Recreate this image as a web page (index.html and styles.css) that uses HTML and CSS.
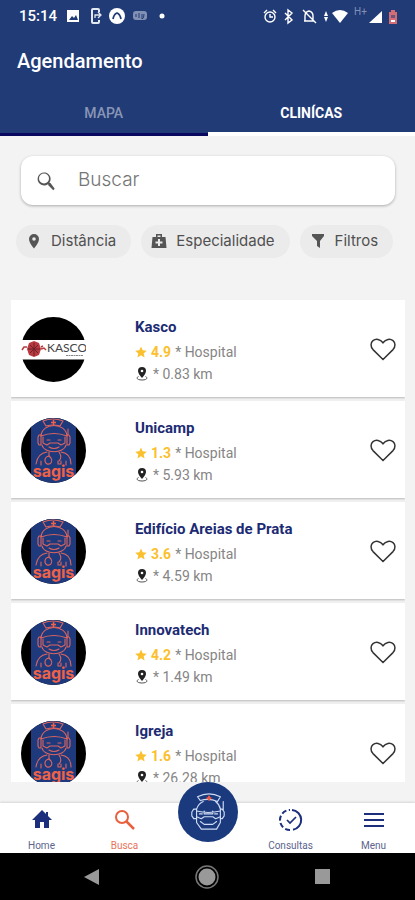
FILE: index.html
```html
<!DOCTYPE html>
<html lang="pt-BR">
<head>
    <meta charset="utf-8">
    <meta name="viewport" content="width=device-width, initial-scale=1">
    <title>Agendamento</title>
    <link rel="stylesheet" href="styles.css">
</head>
<body>

<svg class="sprite" aria-hidden="true">
    <symbol id="heart" viewBox="0 0 26 23">
        <path d="M13 21.500 3 11.600C.3 8.800.5 4.700 3 2.700c2.800-2.300 7.200-1.700 10 2 2.800-3.700 7.200-4.300 10-2 2.500 2 2.700 6.100 0 8.900z" fill="#fff" stroke="#333" stroke-width="1.500"/>
    </symbol>
    <symbol id="star" viewBox="0 0 24 24">
        <path d="m12 1 3.300 7.600 8.200.700-6.200 5.500 1.900 8.200-7.200-4.300L4.800 23l1.900-8.200L.5 9.300l8.200-.7z" fill="#fbc02d"/>
    </symbol>
    <symbol id="place" viewBox="0 0 12 14">
        <path d="M6 0a4 4 0 0 0-4 4c0 2.800 4 7 4 7s4-4.200 4-7a4 4 0 0 0-4-4z" fill="#222"/>
        <circle cx="6" cy="4" r="1.300" fill="#fff"/>
        <path d="M2.500 9.500C-.5 11 1.500 13 6 13s6.500-2 3.500-3.500" fill="none" stroke="#555"/>
    </symbol>
    <symbol id="nurse" viewBox="0 0 42 42">
        <g fill="none" stroke="currentColor" stroke-width="1.200" stroke-linejoin="round" stroke-linecap="round">
            <path d="M13 9 10 5q12-6 24 0l-3 5q-9-4-18-1z"/>
            <path d="M9 18q2-6 7-8M34 18q-1-5-5-8"/>
            <path d="M9 18H6l-2 3v4l2 3h3zM34 18h2l2 3v4l-2 3h-2zM37 19v-9"/>
            <path d="M9 20q12 3 25 0M9 26l5 2 3-2h9l3 2 5-2M17 20v3h9v-3"/>
            <path d="M9 28v4l5 7h16l4-7v-4M13 31l4 3h9l4-3"/>
            <path d="M12 23h3M28 23h3"/>
        </g>
        <path d="M22 4v5M19.500 6.500h5" stroke="#f05a40" stroke-width="2"/>
    </symbol>
    <symbol id="sagis" viewBox="0 0 65 65">
        <clipPath id="round"><circle cx="32.500" cy="32.500" r="32.500"/></clipPath>
        <g clip-path="url(#round)">
            <path d="M0 0h65v65H0z" fill="#000"/>
            <path d="M10 0h45v65H10z" fill="#1e3a7c"/>
            <g fill="none" stroke="#dc6560" stroke-width="1.100" stroke-linecap="round" stroke-linejoin="round">
                <path d="M25 8 22 3q10-4 20 0l-3 5q-7-2-14 0z"/>
                <path d="M20 18c1-14 25-14 26 0M20 18q13-5 26 0"/>
                <path d="M20 17h-2l-1 2v6l1 2h2zM46 17h2l1 2v6l-1 2h-2zM47 17v-6"/>
                <path d="M22 19v6l4 2 3-2h8l3 2 4-2v-6M26 22h3M37 22h3"/>
                <path d="M21 27c2 9 22 9 24 0M28 29q5 3 10 0"/>
                <path d="M26 34c-7 1-10 5-11 12M40 34c7 1 10 5 10 12M28 34v4M38 34c2 3 3 6 0 9"/>
                <path d="M28 38c-5 1-5 6-2 8 4 1 6-3 4-6zM37 43v3h3v-3M20 43v4M45 43v4"/>
            </g>
            <path d="M32.500 2v5M30 4.500h5" stroke="#ef6248" stroke-width="1.500"/>
        </g>
        <text x="32.500" y="59" text-anchor="middle" class="sagis-name">sagis</text>
    </symbol>
    <symbol id="kasco" viewBox="0 0 65 65">
        <circle cx="32.500" cy="32.500" r="32.500"/>
        <path d="M0 23h65v19.500H0z" fill="#fff"/>
        <path d="M13 24l5 2 2 6-2 6-5 2-5-2-2-6 2-6z" fill="#b83a40"/>
        <path d="M9 28l8 8M17 28l-8 8M13 26v13M7 32h12" stroke="#6d2028" stroke-width="1"/>
        <path d="M6 30H3l-2 3M20 32l3-1 2 2M20 30l2-1" fill="none" stroke="#b83a40" stroke-width="1.500"/>
        <text x="26" y="35" class="kasco-name">KASCO</text>
        <path d="M45 38.500h17" stroke="#888" stroke-dasharray="2 .5"/>
    </symbol>
</svg>

<div class="app">
    <header class="top">
        <div class="status">
            <span class="clock">15:14</span>
            <svg width="110" height="18" viewBox="0 0 110 18">
                <path d="M1 3h12v12H1z" fill="#fff"/>
                <path d="m3 13 3-4 2 2 2-3 2 5z" fill="#213b77"/>
                <path d="M33 5V3q0-1-1-1h-5q-1 0-1 1v12q0 1 1 1h5q1 0 1-1v-2" fill="none" stroke="#e4e8f0" stroke-width="2"/>
                <path d="M29 11V8h5M32 5l3 3-3 3" fill="none" stroke="#e4e8f0" stroke-width="1.300"/>
                <circle cx="51" cy="9" r="8" fill="#fff"/>
                <path d="M47 12q1-5 4-6 3 1 4 6" fill="none" stroke="#213b77" stroke-width="1.800"/>
                <rect x="67" y="4" width="14" height="9" rx="3" fill="#8290b3"/>
                <path d="M70 7v3M73 6v5M76 7v5q2 0 2-5" stroke="#213b77" fill="none"/>
                <circle cx="96" cy="9" r="2.500" fill="#fff"/>
            </svg>
            <svg class="status-right" width="136" height="22" viewBox="0 0 136 22">
                <g fill="none" stroke="#fff" stroke-width="1.400">
                    <circle cx="7" cy="12" r="5"/>
                    <path d="M7 9v3h3M1 8l3-3M13 8l-3-3M22 8l7 7-4 3V5l4 3-7 7"/>
                    <path d="M42 16v-5q0-4 4-5 4 1 4 5v5M41 16h10M40 5l13 13"/>
                </g>
                <path d="m61 11 2-5 2 5zM61 12l2 5 2-5z" fill="#fff"/>
                <path d="M69 8q8-6 16 0l-8 10z" fill="#fff"/>
                <text x="91" y="10" class="network">H+</text>
                <path d="M119 6v12h-13z" fill="#fff"/>
                <path d="M126 7h2V5h4v2h2v12h-8z" fill="#d36d75"/>
                <path d="M128 16h4" stroke="#fff" stroke-width="2"/>
                <path d="M128 10h4v3h-4z" fill="#6d5478"/>
            </svg>
        </div>
        <h1 class="title">Agendamento</h1>
        <nav class="tabs">
            <button class="tab">MAPA</button>
            <button class="tab active">CLINÍCAS</button>
        </nav>
    </header>

    <main class="page">
        <label class="search">
            <svg width="24" height="24" viewBox="0 0 24 24"><path d="M15.500 14h-.79l-.28-.27A6.500 6.500 0 1 0 13 15.200l.28.28v.79l5 4.990L19.700 19.800zM9 14.500A5 5 0 1 1 9 4.500a5 5 0 0 1 0 10z" fill="#555"/></svg>
            <input type="search" placeholder="Buscar" aria-label="Buscar">
        </label>

        <div class="chips">
            <button class="chip">
                <svg width="16" height="16" viewBox="0 0 16 16"><path d="M8 1a5 5 0 0 0-5 5c0 4 5 9.500 5 9.500S13 10 13 6a5 5 0 0 0-5-5zm0 3.200a1.800 1.800 0 1 1 0 3.600 1.800 1.800 0 0 1 0-3.600z" fill="#555" fill-rule="evenodd"/></svg>
                Distância
            </button>
            <button class="chip">
                <svg width="16" height="16" viewBox="0 0 16 16"><path d="M5 4V1h6v3h3.500l1 11H.5l1-11zm1.500 0h3V2.500h-3zM7 6v2.500H4.500v2H7V13h2v-2.500h2.500v-2H9V6z" fill="#555" fill-rule="evenodd"/></svg>
                Especialidade
            </button>
            <button class="chip">
                <svg width="16" height="16" viewBox="0 0 16 16"><path d="M2 1h12v2l-4 5v7l-3-2V8L2 3z" fill="#555"/></svg>
                Filtros
            </button>
        </div>

        <section class="list">
            <article class="card">
                <svg class="avatar"><use href="#kasco"/></svg>
                <div class="info">
                    <h2>Kasco</h2>
                    <p><svg class="star"><use href="#star"/></svg><b>4.9</b> * Hospital</p>
                    <p><svg class="place"><use href="#place"/></svg>* 0.83 km</p>
                </div>
                <button class="fav" aria-label="Favoritar"><svg><use href="#heart"/></svg></button>
            </article>
            <article class="card">
                <svg class="avatar"><use href="#sagis"/></svg>
                <div class="info">
                    <h2>Unicamp</h2>
                    <p><svg class="star"><use href="#star"/></svg><b>1.3</b> * Hospital</p>
                    <p><svg class="place"><use href="#place"/></svg>* 5.93 km</p>
                </div>
                <button class="fav" aria-label="Favoritar"><svg><use href="#heart"/></svg></button>
            </article>
            <article class="card">
                <svg class="avatar"><use href="#sagis"/></svg>
                <div class="info">
                    <h2>Edifício Areias de Prata</h2>
                    <p><svg class="star"><use href="#star"/></svg><b>3.6</b> * Hospital</p>
                    <p><svg class="place"><use href="#place"/></svg>* 4.59 km</p>
                </div>
                <button class="fav" aria-label="Favoritar"><svg><use href="#heart"/></svg></button>
            </article>
            <article class="card">
                <svg class="avatar"><use href="#sagis"/></svg>
                <div class="info">
                    <h2>Innovatech</h2>
                    <p><svg class="star"><use href="#star"/></svg><b>4.2</b> * Hospital</p>
                    <p><svg class="place"><use href="#place"/></svg>* 1.49 km</p>
                </div>
                <button class="fav" aria-label="Favoritar"><svg><use href="#heart"/></svg></button>
            </article>
            <article class="card">
                <svg class="avatar"><use href="#sagis"/></svg>
                <div class="info">
                    <h2>Igreja</h2>
                    <p><svg class="star"><use href="#star"/></svg><b>1.6</b> * Hospital</p>
                    <p><svg class="place"><use href="#place"/></svg>* 26.28 km</p>
                </div>
                <button class="fav" aria-label="Favoritar"><svg><use href="#heart"/></svg></button>
            </article>
        </section>
    </main>

    <nav class="bottom">
        <a href="#home">
            <svg width="24" height="24" viewBox="0 0 24 24"><path d="M12 2 2 12h3v8h5v-6h4v6h5v-8h3L18 8V4h-2v2z" fill="#1b2f7c"/></svg>
            Home
        </a>
        <a href="#busca" class="current">
            <svg width="24" height="24" viewBox="0 0 24 24"><circle cx="9" cy="9" r="6" fill="none" stroke="#e8613c" stroke-width="2"/><path d="m13.500 13.500 7.500 7.500" stroke="#e8613c" stroke-width="2.500"/></svg>
            Busca
        </a>
        <a href="#sagis-chat" class="mascot" aria-label="Sagis"><svg><use href="#nurse"/></svg></a>
        <a href="#consultas">
            <svg width="24" height="24" viewBox="0 0 24 24" fill="none" stroke="#1b2f7c" stroke-width="2"><path d="M13 2a10 10 0 0 1 1 19.800"/><path d="M11 22A10 10 0 0 1 11 2" stroke-dasharray="5 2.500"/><path d="m8 12 3 3 6-6" stroke-width="1.700"/></svg>
            Consultas
        </a>
        <a href="#menu">
            <svg width="24" height="24" viewBox="0 0 24 24"><path d="M2 6h20M2 12h20M2 18h20" stroke="#1b2f7c" stroke-width="2"/></svg>
            Menu
        </a>
    </nav>

    <footer class="system">
        <button aria-label="Voltar"><svg width="24" height="24" viewBox="0 0 24 24"><path d="M19 4v16L4 12z" fill="#999"/></svg></button>
        <button aria-label="Início"><svg width="24" height="24" viewBox="0 0 24 24"><circle cx="12" cy="12" r="8.500" fill="#999"/><circle cx="12" cy="12" r="11" fill="none" stroke="#777" stroke-width="1.500"/></svg></button>
        <button aria-label="Recentes"><svg width="24" height="24" viewBox="0 0 24 24"><path d="M4 4h15v15H4z" fill="#999"/></svg></button>
    </footer>
</div>
</body>
</html>
```
FILE: styles.css
```css
* {
    box-sizing: border-box;
}

body {
    margin: 0;
    font-family: Roboto, "Liberation Sans", sans-serif;
    background: #f3f3f3;
}

button {
    border: 0;
    padding: 0;
    background: transparent;
    font-family: inherit;
}

.sprite {
    position: absolute;
    width: 0;
    height: 0;
}

.app {
    display: flex;
    flex-direction: column;
    height: 100vh;
}

/* header */
.top {
    background: #213b77;
    color: #fff;
}

.status {
    display: flex;
    align-items: center;
    height: 32px;
    padding: 0 16px 0 19px;
}

.clock {
    width: 47px;
    font-size: 15px;
    font-weight: 500;
}

.status-right {
    margin-left: auto;
}

.network {
    font-size: 10px;
    fill: #8290b3;
}

.title {
    margin: 0;
    padding: 0 17px;
    font-size: 20px;
    font-weight: 500;
    line-height: 58px;
}

.tabs {
    display: flex;
    height: 46px;
}

.tab {
    flex: 1;
    padding-top: 2px;
    border-bottom: 3px solid #08085f;
    color: #8996b5;
    font-size: 14px;
    font-weight: 500;
}

.tab.active {
    padding-top: 4px;
    border-bottom: 4px solid #fff;
    color: #fff;
    font-weight: 700;
}

/* search and filters */
.page {
    flex: 1;
    display: flex;
    flex-direction: column;
    min-height: 0;
    padding: 20px 10px 21px 11px;
}

.search {
    display: flex;
    align-items: center;
    gap: 19px;
    height: 49px;
    margin: 0 10px;
    padding: 0 14px;
    border-radius: 12px;
    background: #fff;
    box-shadow: 0 1px 3px rgba(0, 0, 0, .3);
}

.search svg {
    flex: none;
}

.search input {
    flex: 1;
    min-width: 0;
    border: 0;
    outline: 0;
    padding: 0 0 2px;
    background: transparent;
    font-family: Inter, sans-serif;
    font-size: 19px;
    font-weight: 300;
}

.search input::placeholder {
    color: #757575;
}

.chips {
    display: flex;
    gap: 10px;
    margin: 20px 3px 42px 5px;
}

.chip {
    display: flex;
    align-items: center;
    gap: 9px;
    height: 33px;
    padding: 0 15px 2px 10px;
    border-radius: 17px;
    background: #ebebeb;
    color: #505050;
    font-family: Inter, sans-serif;
    font-size: 15px;
    white-space: nowrap;
}

/* clinics */
.list {
    flex: 1;
    min-height: 0;
    overflow: hidden;
}

.card {
    display: flex;
    align-items: center;
    height: 97px;
    margin-bottom: 4px;
    padding: 2px 9px 0 10px;
    background: #fff;
    box-shadow: 0 1px 2px rgba(0, 0, 0, .25);
}

.avatar {
    width: 65px;
    height: 65px;
    margin-right: 49px;
}

.sagis-name {
    font-family: Inter, sans-serif;
    font-size: 16px;
    font-weight: 700;
    fill: #ef6248;
}

.kasco-name {
    font-family: Lato, sans-serif;
    font-size: 12px;
    fill: #444;
}

.info {
    flex: 1;
    padding-top: 3px;
}

.info h2 {
    margin: 0 0 4px;
    color: #1c2b73;
    font-size: 15px;
    font-weight: 700;
    line-height: 20px;
}

.info p {
    display: flex;
    align-items: center;
    gap: 4px;
    margin: 0;
    color: #858585;
    font-size: 14px;
    line-height: 22px;
}

.info b {
    color: #fbc02d;
}

.star {
    width: 12px;
    height: 12px;
}

.place {
    width: 14px;
    height: 14px;
}

.fav svg {
    display: block;
    width: 26px;
    height: 23px;
}

/* bottom bar */
.bottom {
    display: grid;
    grid-template-columns: repeat(5, 1fr);
    height: 50px;
    background: #fff;
    box-shadow: 0 -1px 2px rgba(0, 0, 0, .12);
}

.bottom a {
    display: flex;
    flex-direction: column;
    align-items: center;
    gap: 8px;
    padding-top: 5px;
    color: #5a648c;
    font-size: 10px;
    line-height: 12px;
    text-decoration: none;
}

.bottom .current {
    color: #e8745a;
}

.bottom .mascot {
    justify-self: center;
    justify-content: center;
    width: 60px;
    height: 60px;
    margin-top: -21px;
    padding: 0;
    border-radius: 50%;
    background: #1b3a7e;
    color: #d0dcf5;
}

.mascot svg {
    width: 40px;
    height: 40px;
}

.system {
    display: flex;
    justify-content: space-around;
    align-items: center;
    height: 47px;
    padding: 0 34px;
    background: #000;
}

.system svg {
    display: block;
}
```
